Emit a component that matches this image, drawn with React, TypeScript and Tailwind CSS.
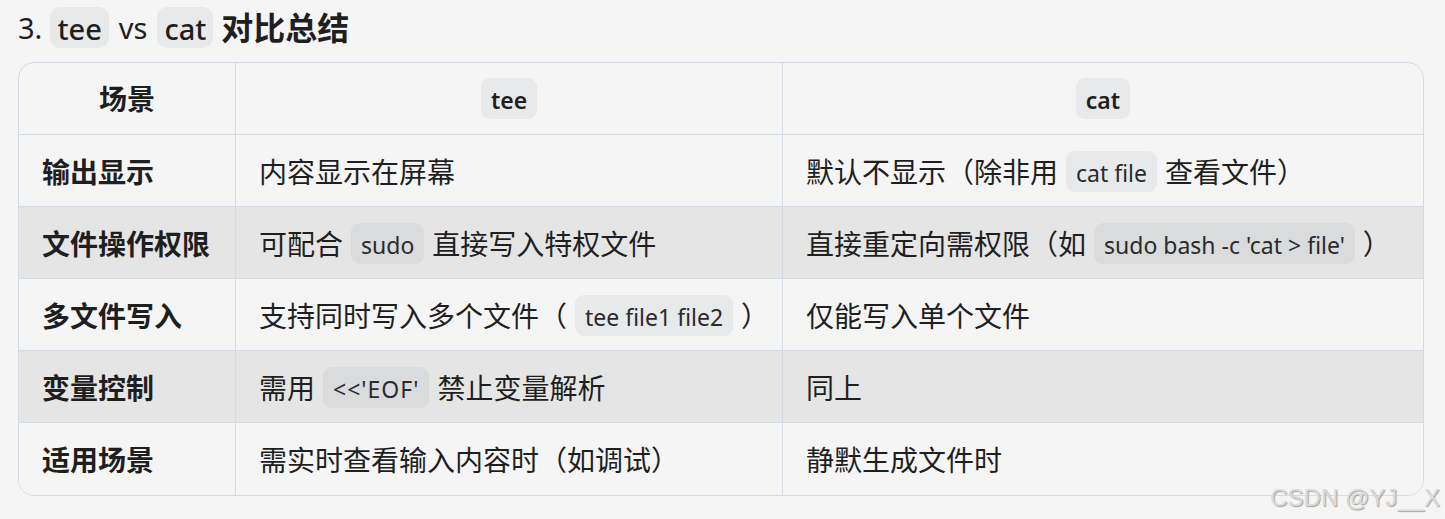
import React from 'react'

type Part = string | { code: string }

const rows: { name: string; tee: Part[]; cat: Part[] }[] = [
  { name: '输出显示', tee: ['内容显示在屏幕'], cat: ['默认不显示（除非用', { code: 'cat file' }, '查看文件）'] },
  { name: '文件操作权限', tee: ['可配合', { code: 'sudo' }, '直接写入特权文件'], cat: ['直接重定向需权限（如', { code: "sudo bash -c 'cat > file'" }, '）'] },
  { name: '多文件写入', tee: ['支持同时写入多个文件（', { code: 'tee file1 file2' }, '）'], cat: ['仅能写入单个文件'] },
  { name: '变量控制', tee: ['需用', { code: "<<'EOF'" }, '禁止变量解析'], cat: ['同上'] },
  { name: '适用场景', tee: ['需实时查看输入内容时（如调试）'], cat: ['静默生成文件时'] },
]

function Code({ children, dark }: { children: React.ReactNode; dark?: boolean }) {
  return (
    <code
      className={`mx-[8px] inline-flex h-[41px] shrink-0 items-center whitespace-nowrap rounded-[9px] px-[10px] pt-[3px] text-[23px] text-[#2b2b2b] [font-family:'Noto_Sans','Noto_Sans_CJK_SC',sans-serif] ${
        dark ? 'bg-[#dadbdd]' : 'bg-[#e8e9eb]'
      }`}
    >
      {children}
    </code>
  )
}

function Cell({ parts, dark }: { parts: Part[]; dark?: boolean }) {
  return (
    <>
      {parts.map((p, i) =>
        typeof p === 'string' ? (
          <span key={i} className="shrink-0 whitespace-nowrap">{p}</span>
        ) : (
          <Code key={i} dark={dark}>
            {p.code.startsWith('<<') ? <span className="tracking-[1px]">{p.code}</span> : p.code}
          </Code>
        )
      )}
    </>
  )
}

export default function App() {
  return (
    <div className="relative h-[519px] w-[1445px] bg-[#f5f5f5] pl-[18px] pr-[21px] text-[#1f1f1f] [font-family:'Noto_Sans','Noto_Sans_CJK_SC',sans-serif]">
      {/* Title */}
      <h3 className="flex h-[55px] items-center text-[29px] leading-none">
        <span>3.</span>
        <code className="ml-[8px] inline-flex h-[41px] items-center rounded-[10px] bg-[#e8e9eb] px-[7px] pt-[2px] text-[29px] font-medium [font-family:'Noto_Sans',sans-serif]">tee</code>
        <span className="mx-[10px]">vs</span>
        <code className="inline-flex h-[41px] items-center rounded-[10px] bg-[#e8e9eb] px-[7px] pt-[2px] text-[29px] font-medium [font-family:'Noto_Sans',sans-serif]">cat</code>
        <span className="ml-[8px] text-[32px] font-bold">对比总结</span>
      </h3>

      {/* Table */}
      <div className="mt-[7px] grid grid-cols-[217px_547px_1fr] overflow-hidden rounded-[16px] border border-[#d5dbe5] text-[28px]">
        <div className="flex h-[72px] items-center justify-center border-b border-r border-[#d5dbe5] font-bold">场景</div>
        <div className="flex h-[72px] items-center justify-center border-b border-r border-[#d5dbe5]">
          <Code>
            <span className="font-semibold text-[#1f1f1f]">tee</span>
          </Code>
        </div>
        <div className="flex h-[72px] items-center justify-center border-b border-[#d5dbe5]">
          <Code>
            <span className="font-semibold text-[#1f1f1f]">cat</span>
          </Code>
        </div>

        {rows.map((r, i) => {
          const dark = i % 2 === 1
          const last = i === rows.length - 1
          const bg = dark ? 'bg-[#e5e5e5]' : 'bg-[#f5f5f5]'
          const bb = last ? '' : 'border-b'
          return (
            <React.Fragment key={r.name}>
              <div className={`flex h-[72px] items-center border-r border-[#d5dbe5] px-[23px] pt-[2px] font-bold ${bg} ${bb}`}>{r.name}</div>
              <div className={`flex h-[72px] items-center border-r border-[#d5dbe5] px-[23px] pt-[2px] ${bg} ${bb}`}>
                <Cell parts={r.tee} dark={dark} />
              </div>
              <div className={`flex h-[72px] items-center border-[#d5dbe5] px-[23px] pt-[2px] ${bg} ${bb}`}>
                <Cell parts={r.cat} dark={dark} />
              </div>
            </React.Fragment>
          )
        })}
      </div>

      {/* Watermark */}
      <span className="absolute right-[5px] top-[480px] text-[24px] text-[#dadada] [font-family:'Liberation_Sans',sans-serif] [text-shadow:1px_1px_1px_#a0a0a0]">
        CSDN @YJ__X
      </span>
    </div>
  )
}
